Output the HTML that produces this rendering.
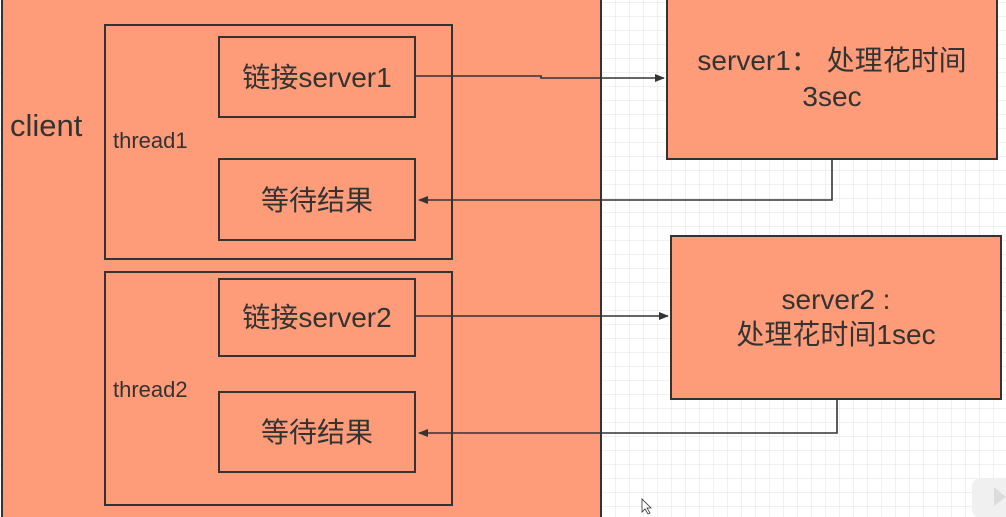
<!DOCTYPE html>
<html><head><meta charset="utf-8"><style>
html,body{margin:0;padding:0;width:1006px;height:517px;overflow:hidden;background:#fff}
svg text{font-family:"Liberation Sans","Noto Sans CJK SC",sans-serif;fill:#333}
</style></head><body>
<svg width="1006" height="517" viewBox="0 0 1006 517" xmlns="http://www.w3.org/2000/svg">
<defs>
<pattern id="g" width="14" height="14" patternUnits="userSpaceOnUse" x="0" y="3">
<path d="M14 0V14M0 14H14" stroke="#e2e2e2" stroke-width="1" fill="none"/>
</pattern>
<marker id="a" markerWidth="10" markerHeight="8" refX="9" refY="4" orient="auto" markerUnits="userSpaceOnUse">
<path d="M0 0L10 4L0 8Z" fill="#333"/>
</marker>
</defs>
<rect width="1006" height="517" fill="url(#g)"/>
<g fill="#fe9b78" stroke="#333" stroke-width="2">
<rect x="2" y="-2" width="599" height="525"/>
<rect x="105" y="25" width="347" height="234"/>
<rect x="105" y="272" width="347" height="233"/>
<rect x="219" y="37" width="196" height="80"/>
<rect x="219" y="159" width="196" height="81"/>
<rect x="219" y="279" width="196" height="77"/>
<rect x="219" y="392" width="196" height="80"/>
<rect x="667" y="-2" width="330" height="161"/>
<rect x="671" y="236" width="330" height="163"/>
</g>
<g fill="none" stroke="#333" stroke-width="1.6">
<path d="M415 76H541V78H664" marker-end="url(#a)"/>
<path d="M832 159V200H419" marker-end="url(#a)"/>
<path d="M415 316H668" marker-end="url(#a)"/>
<path d="M837 399V433H419" marker-end="url(#a)"/>
</g>
<text x="10" y="136" font-size="31">client</text>
<text x="113" y="148" font-size="22">thread1</text>
<text x="113" y="397" font-size="22">thread2</text>
<g font-size="28" text-anchor="middle">
<text x="317" y="87">链接server1</text>
<text x="317" y="210">等待结果</text>
<text x="317" y="327">链接server2</text>
<text x="317" y="442">等待结果</text>
<text x="832" y="70">server1： 处理花时间</text>
<text x="832" y="106">3sec</text>
<text x="836" y="309">server2 :</text>
<text x="836" y="344">处理花时间1sec</text>
</g>
<path d="M642 499V512L645 509L648 514L650 513L647 508H651Z" fill="#fff" stroke="#333" stroke-width="0.8"/>
<rect x="972" y="478" width="40" height="40" rx="8" fill="#f0f0f0"/>
<path d="M994 487L1006 497L994 506Z" fill="#dcdcdc"/>
</svg>
</body></html>
